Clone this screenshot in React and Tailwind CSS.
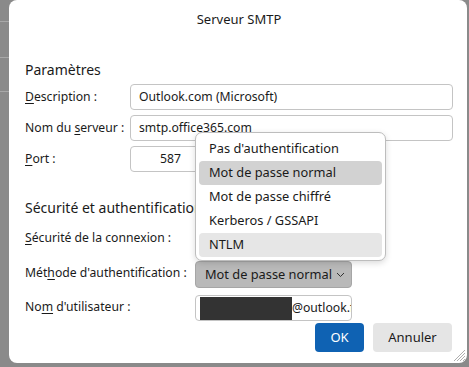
import React from "react"

const font = { fontFamily: '"Noto Sans", "Open Sans", sans-serif' }

function U({ children }) {
    return <span className="underline underline-offset-2">{children}</span>
}

function Field({ children, className = "" }) {
    return (
        <div className={"h-[26px] flex items-center border border-[#c4c4c4] rounded-[4px] bg-white px-[8px] " + className}>
            {children}
        </div>
    )
}

export default function App() {
    const items = [
        { label: "Pas d'authentification", bg: "" },
        { label: "Mot de passe normal", bg: "bg-[#d2d2d2]" },
        { label: "Mot de passe chiffré", bg: "" },
        { label: "Kerberos / GSSAPI", bg: "" },
        { label: "NTLM", bg: "bg-[#e6e6e6]" },
    ]

    return (
        <div className="w-[469px] h-[367px] bg-[#8a8a8a] relative overflow-hidden flex text-[12.2px] text-[#1a1a1a]" style={font}>
            {/* window behind */}
            <div className="w-[9px] flex flex-col shrink-0">
                <div className="h-[21px]" />
                <div className="h-px bg-[#a8a8a8]" />
                <div className="h-[35px]" />
                <div className="h-px bg-[#a8a8a8]" />
                <div className="h-[33px]" />
                <div className="h-px bg-[#a8a8a8]" />
            </div>

            <div className="w-[458px] h-[363px] bg-white rounded-[8px] relative flex flex-col pl-[16px] pr-[14px]">
                <div className="h-[38px] flex items-center justify-center text-[13px] pt-[1px]">Serveur SMTP</div>

                <div className="h-[25px] mt-[19px] flex items-center text-[14px]">Paramètres</div>

                <div className="grid grid-cols-[105px_1fr] items-center gap-y-[5px] mt-[2px] whitespace-nowrap">
                    <div><U>D</U>escription :</div>
                    <Field>Outlook.com (Microsoft)</Field>
                    <div>Nom du <U>s</U>erveur :</div>
                    <Field>smtp.office365.com</Field>
                    <div><U>P</U>ort :</div>
                    <Field className="w-[76px] h-[24px] justify-end pr-[24px]">587</Field>
                </div>

                <div className="h-[25px] mt-[23px] flex items-center text-[14px]">Sécurité et authentification</div>

                <div className="grid grid-cols-[170px_157px] items-center gap-y-[7px] mt-[5px] whitespace-nowrap">
                    <div className="mb-[3px]"><U>S</U>écurité de la connexion :</div>
                    <Field className="mb-[3px]" />
                    <div className="-translate-y-[1px]">Mét<U>h</U>ode d'authentification :</div>
                    <div className="h-[27px] flex items-center gap-[4px] bg-[#b9b9b9] border border-[#a6a6a6] rounded-[4px] pl-[9px] text-[12.8px]">
                        <span>Mot de passe normal</span>
                        <svg width="9" height="6" viewBox="0 0 9 6" fill="none">
                            <path d="M1 1l3.5 3.5L8 1" stroke="#333" strokeWidth="1" />
                        </svg>
                    </div>
                    <div className="-translate-y-[1px]">No<U>m</U> d'utilisateur :</div>
                    <div className="h-[26px] flex items-center border border-[#c4c4c4] rounded-[4px] bg-white pl-[4px] overflow-hidden">
                        <div className="w-[92px] h-[23px] bg-[#333333] shrink-0" />
                        <span>@outlook.f</span>
                    </div>
                </div>

                <div className="flex justify-end gap-[9px] mt-[2px] pr-[1px]">
                    <button className="w-[49px] h-[29px] rounded-[4px] bg-[#0f62b3] text-white text-[13px]">OK</button>
                    <button className="w-[79px] h-[29px] rounded-[4px] bg-[#e5e5e5] text-[13px]">Annuler</button>
                </div>

                {/* resize grip */}
                <svg className="absolute right-[1px] bottom-[1px]" width="12" height="12" viewBox="0 0 12 12">
                    <path d="M11 3L3 11M11 6L6 11M11 9L9 11M11 0L0 11" stroke="#9a9a9a" strokeWidth="0.8" />
                </svg>

                {/* open dropdown */}
                <div className="absolute left-[186px] top-[132px] w-[191px] h-[129px] bg-white border border-[#bdbdbd] rounded-[7px] shadow-[0_2px_6px_rgba(0,0,0,0.15)] p-[3px] flex flex-col justify-center text-[12.8px]">
                    {items.map((it) => (
                        <div key={it.label} className={"h-[24px] flex items-center pl-[10px] rounded-[4px] " + it.bg}>
                            {it.label}
                        </div>
                    ))}
                </div>
            </div>
            <div className="absolute left-0 bottom-0 w-full h-[4px] bg-[#8a8a8a]" />
        </div>
    )
}
